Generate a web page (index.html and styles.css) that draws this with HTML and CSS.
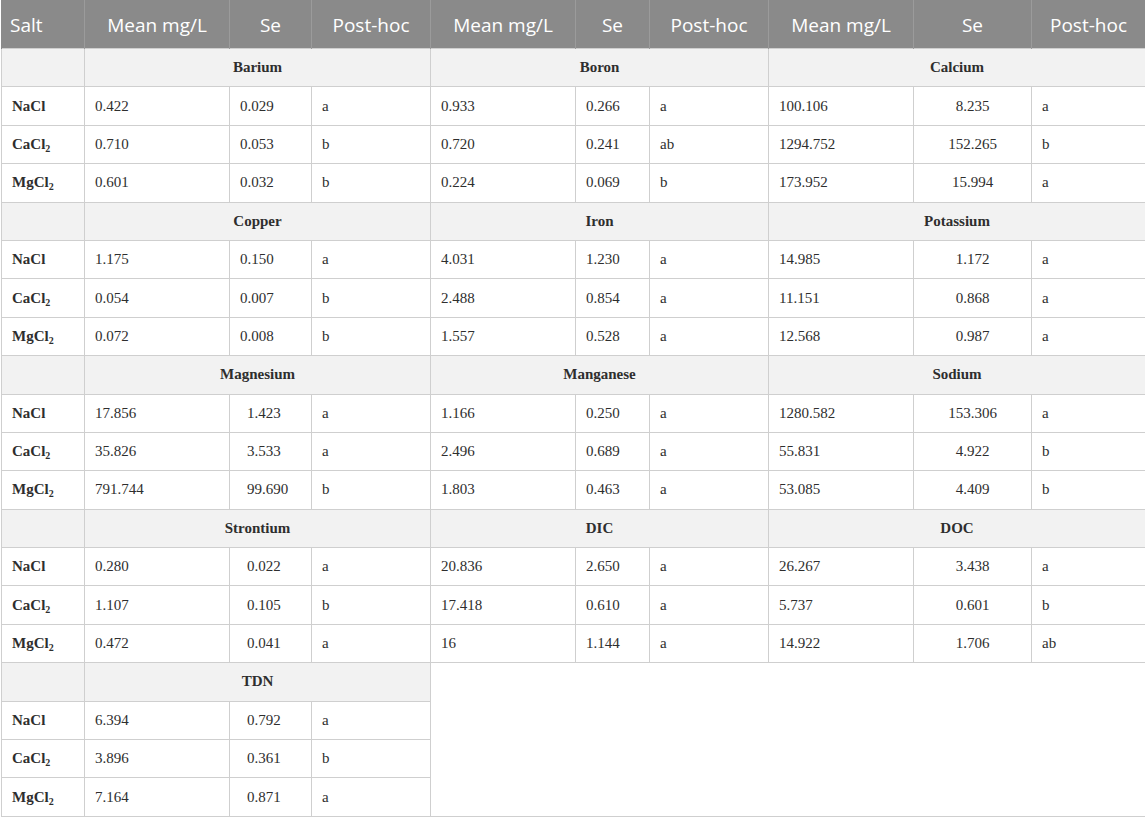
FILE: index.html
```html
<!DOCTYPE html>
<html>
<head>
<meta charset="utf-8">
<link rel="stylesheet" href="styles.css">
</head>
<body>
<table class="tbl">
<colgroup>
<col class="c-salt"><col class="c-mean"><col class="c-se1"><col class="c-ph">
<col class="c-mean"><col class="c-se2"><col class="c-ph">
<col class="c-mean"><col class="c-se3"><col class="c-ph3">
</colgroup>
<thead>
<tr class="head">
<th class="h-salt">Salt</th><th>Mean mg/L</th><th>Se</th><th>Post-hoc</th>
<th>Mean mg/L</th><th>Se</th><th>Post-hoc</th>
<th>Mean mg/L</th><th>Se</th><th>Post-hoc</th>
</tr>
</thead>
<tbody>
<tr class="grp"><td></td><td colspan="3">Barium</td><td colspan="3">Boron</td><td colspan="3">Calcium</td></tr>
<tr><td class="salt">NaCl</td><td>0.422</td><td>0.029</td><td>a</td><td>0.933</td><td>0.266</td><td>a</td><td>100.106</td><td class="ctr">8.235</td><td>a</td></tr>
<tr><td class="salt">CaCl<sub>2</sub></td><td>0.710</td><td>0.053</td><td>b</td><td>0.720</td><td>0.241</td><td>ab</td><td>1294.752</td><td class="ctr">152.265</td><td>b</td></tr>
<tr><td class="salt">MgCl<sub>2</sub></td><td>0.601</td><td>0.032</td><td>b</td><td>0.224</td><td>0.069</td><td>b</td><td>173.952</td><td class="ctr">15.994</td><td>a</td></tr>

<tr class="grp"><td></td><td colspan="3">Copper</td><td colspan="3">Iron</td><td colspan="3">Potassium</td></tr>
<tr><td class="salt">NaCl</td><td>1.175</td><td>0.150</td><td>a</td><td>4.031</td><td>1.230</td><td>a</td><td>14.985</td><td class="ctr">1.172</td><td>a</td></tr>
<tr><td class="salt">CaCl<sub>2</sub></td><td>0.054</td><td>0.007</td><td>b</td><td>2.488</td><td>0.854</td><td>a</td><td>11.151</td><td class="ctr">0.868</td><td>a</td></tr>
<tr><td class="salt">MgCl<sub>2</sub></td><td>0.072</td><td>0.008</td><td>b</td><td>1.557</td><td>0.528</td><td>a</td><td>12.568</td><td class="ctr">0.987</td><td>a</td></tr>

<tr class="grp"><td></td><td colspan="3">Magnesium</td><td colspan="3">Manganese</td><td colspan="3">Sodium</td></tr>
<tr><td class="salt">NaCl</td><td>17.856</td><td class="ind">1.423</td><td>a</td><td>1.166</td><td>0.250</td><td>a</td><td>1280.582</td><td class="ctr">153.306</td><td>a</td></tr>
<tr><td class="salt">CaCl<sub>2</sub></td><td>35.826</td><td class="ind">3.533</td><td>a</td><td>2.496</td><td>0.689</td><td>a</td><td>55.831</td><td class="ctr">4.922</td><td>b</td></tr>
<tr><td class="salt">MgCl<sub>2</sub></td><td>791.744</td><td class="ind">99.690</td><td>b</td><td>1.803</td><td>0.463</td><td>a</td><td>53.085</td><td class="ctr">4.409</td><td>b</td></tr>

<tr class="grp"><td></td><td colspan="3">Strontium</td><td colspan="3">DIC</td><td colspan="3">DOC</td></tr>
<tr><td class="salt">NaCl</td><td>0.280</td><td class="ind">0.022</td><td>a</td><td>20.836</td><td>2.650</td><td>a</td><td>26.267</td><td class="ctr">3.438</td><td>a</td></tr>
<tr><td class="salt">CaCl<sub>2</sub></td><td>1.107</td><td class="ind">0.105</td><td>b</td><td>17.418</td><td>0.610</td><td>a</td><td>5.737</td><td class="ctr">0.601</td><td>b</td></tr>
<tr><td class="salt">MgCl<sub>2</sub></td><td>0.472</td><td class="ind">0.041</td><td>a</td><td>16</td><td>1.144</td><td>a</td><td>14.922</td><td class="ctr">1.706</td><td>ab</td></tr>

<tr class="grp"><td></td><td colspan="3">TDN</td><td class="blank" colspan="6" rowspan="4"></td></tr>
<tr><td class="salt">NaCl</td><td>6.394</td><td class="ind">0.792</td><td>a</td></tr>
<tr><td class="salt">CaCl<sub>2</sub></td><td>3.896</td><td class="ind">0.361</td><td>b</td></tr>
<tr><td class="salt">MgCl<sub>2</sub></td><td>7.164</td><td class="ind">0.871</td><td>a</td></tr>
</tbody>
</table>
</body>
</html>
```

FILE: styles.css
```css
html, body {
  margin: 0;
  padding: 0;
  background: #ffffff;
}

.tbl {
  width: 1144px;
  margin-left: 1px;
  border-collapse: collapse;
  table-layout: fixed;
  font-family: "Liberation Serif", "Times New Roman", serif;
  font-size: 15px;
  color: #2e2e2e;
}

.c-salt { width: 83px; }
.c-mean { width: 145px; }
.c-se1 { width: 82px; }
.c-se2 { width: 74px; }
.c-se3 { width: 118px; }
.c-ph { width: 119px; }
.c-ph3 { width: 114px; }

.head {
  height: 48px;
  background: #8a8a8a;
}

.head th {
  font-family: "Open Sans", "Noto Sans", sans-serif;
  font-weight: 400;
  font-size: 19px;
  color: #ffffff;
  text-align: center;
  padding: 0;
  border-left: 1px solid #9b9b9b;
  border-right: 1px solid #9b9b9b;
  border-top: 1px solid #8a8a8a;
}

.head th.h-salt {
  text-align: left;
  padding-left: 8px;
  border-left: 1px solid #8a8a8a;
}

.head th:last-child {
  border-right: 1px solid #8a8a8a;
}

.tbl td {
  height: 37.4px;
  padding: 0 0 0 10px;
  border: 1px solid #cfcfcf;
  text-align: left;
  vertical-align: middle;
  white-space: nowrap;
}

.grp td {
  background: #f2f2f2;
  font-weight: 700;
  text-align: center;
  padding: 0;
}

.salt {
  font-weight: 700;
}

.tbl td.ind {
  padding-left: 17px;
}

.tbl td.ctr {
  text-align: center;
  padding: 0;
}

.tbl td.blank {
  background: #ffffff;
}

sub {
  font-size: 10px;
  line-height: 0;
  vertical-align: -3px;
}
```
